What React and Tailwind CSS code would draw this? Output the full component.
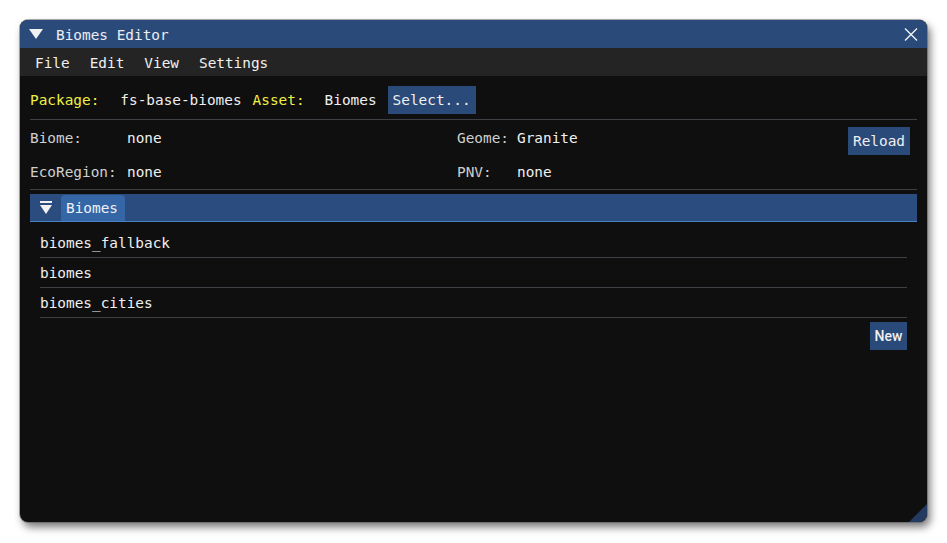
import React from 'react';

/* Biomes Editor – ImGui style tool window */

const Btn = ({ children, className = '' }) => (
  <div className={`h-[28px] flex items-center pt-[1px] bg-[#2a4a7a] text-[#f0f0f0] ${className}`}>{children}</div>
);

const Label = ({ children, className = '' }) => (
  <span className={`text-[#cfcfcf] ${className}`}>{children}</span>
);

const Value = ({ children, className = '' }) => (
  <span className={`text-[#f0f0f0] ${className}`}>{children}</span>
);

const ITEMS = ['biomes_fallback', 'biomes', 'biomes_cities'];

export default function App() {
  return (
    <div className="w-[947px] h-[543px] bg-white pl-[20px] pt-[20px] font-['DejaVu_Sans_Mono',monospace] text-[14.4px] leading-[17px]">
      <div className="relative w-[907px] h-[502px] rounded-[8px] overflow-hidden bg-[#0f0f0f] flex flex-col shadow-[0_0_0_1px_rgba(90,90,90,0.5),3px_5px_8px_rgba(0,0,0,0.55)]">
        {/* title bar */}
        <div className="h-[28px] bg-[#2a4a7a] flex items-center shrink-0">
          <svg width="14" height="10" viewBox="0 0 14 10" className="ml-[9px]">
            <polygon points="0,0 14,0 7,10" fill="#f2f2f2" />
          </svg>
          <span className="ml-[13px] pt-[2px] text-[#eceef4]">Biomes Editor</span>
          <svg width="14" height="13" viewBox="0 0 14 13" className="ml-auto mr-[9px]">
            <path d="M1 0.5 L13 12.5 M13 0.5 L1 12.5" stroke="#f2f2f2" strokeWidth="1.4" fill="none" />
          </svg>
        </div>

        {/* menu bar */}
        <div className="h-[28px] bg-[#242424] flex items-center gap-[20px] pl-[15px] pt-[2px] text-[#f0f0f0] shrink-0">
          <span>File</span>
          <span>Edit</span>
          <span>View</span>
          <span>Settings</span>
        </div>

        {/* body */}
        <div className="flex-1 flex flex-col px-[10px] pt-[10px]">
          <div className="h-[28px] flex items-center">
            <div className="flex items-center pt-[1px]">
              <span className="text-[#f0f043]">Package:</span>
              <Value className="ml-[21px]">fs-base-biomes</Value>
              <span className="ml-[11px] text-[#f0f043]">Asset:</span>
              <Value className="ml-[20px]">Biomes</Value>
            </div>
            <Btn className="ml-[11px] px-[5px]">Select...</Btn>
          </div>

          <div className="mt-[5px] h-px bg-[#3f3f46]" />

          <div className="h-[36px] flex items-center">
            <Label className="w-[97px]">Biome:</Label>
            <Value className="w-[330px]">none</Value>
            <Label className="w-[60px]">Geome:</Label>
            <Value>Granite</Value>
            <Btn className="ml-auto mr-[7px] self-start mt-[7px] px-[5px]">Reload</Btn>
          </div>
          <div className="h-[33px] flex items-center">
            <Label className="w-[97px]">EcoRegion:</Label>
            <Value className="w-[330px]">none</Value>
            <Label className="w-[60px]">PNV:</Label>
            <Value>none</Value>
          </div>

          <div className="h-px bg-[#3f3f46]" />

          {/* tab bar */}
          <div className="mt-[4px] h-[28px] bg-[#2b4c7e] border-b border-[#4a80c6] flex items-end">
            <svg width="12" height="13" viewBox="0 0 12 13" className="ml-[10px] mb-[7px]">
              <rect x="0" y="0" width="12" height="2" fill="#f2f2f2" />
              <polygon points="0,4 12,4 6,13" fill="#f2f2f2" />
            </svg>
            <div className="ml-[9px] h-[26px] rounded-t-[4px] bg-[#3566a6] pl-[5px] pr-[7px] pt-[1px] flex items-center text-[#eef2f8]">
              Biomes
            </div>
          </div>

          {/* list */}
          <div className="mt-[6px] mx-[10px] flex flex-col">
            {ITEMS.map((name) => (
              <div key={name} className="h-[30px] flex items-center pt-[1px] border-b border-[#3f3f46] text-[#f0f0f0]">
                {name}
              </div>
            ))}
          </div>

          <div className="mt-[4px] mr-[10px] flex justify-end">
            <Btn className="w-[37px] justify-center font-['Roboto',sans-serif] font-medium text-[14px]">New</Btn>
          </div>
        </div>

        {/* resize grip */}
        <svg width="18" height="18" viewBox="0 0 18 18" className="absolute right-0 bottom-0">
          <polygon points="18,0 18,18 0,18" fill="#233b60" />
        </svg>
      </div>
    </div>
  );
}
